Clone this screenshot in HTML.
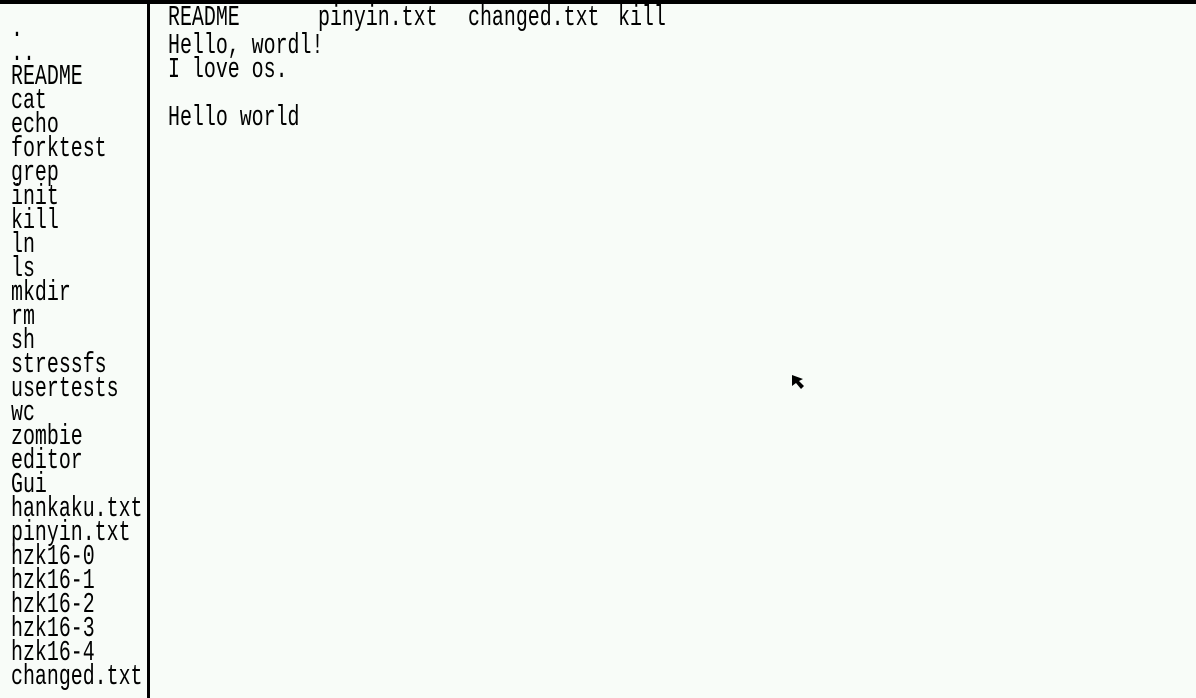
<!DOCTYPE html>
<html><head><style>
html,body{margin:0;padding:0;}
body{width:1196px;height:698px;background:#f8fcf8;position:relative;overflow:hidden;font-family:"Liberation Mono",monospace;color:#000;}
.top{position:absolute;left:0;top:0;width:1196px;height:4px;background:#000;z-index:2;}
.vl{position:absolute;left:147px;top:0;width:3px;height:698px;background:#000;}
.t{position:absolute;white-space:pre;font-size:24px;line-height:20px;transform:scale(0.83,1.2);transform-origin:0 0;}
</style></head><body>
<div class="top"></div>
<div class="vl"></div>
<div class="t" style="left:11px;top:18px;">.
..
README
cat
echo
forktest
grep
init
kill
ln
ls
mkdir
rm
sh
stressfs
usertests
wc
zombie
editor
Gui
hankaku.txt
pinyin.txt
hzk16-0
hzk16-1
hzk16-2
hzk16-3
hzk16-4
changed.txt</div>
<div class="t" style="left:168px;top:7px;">README</div>
<div class="t" style="left:318px;top:7px;">pinyin.txt</div>
<div class="t" style="left:468px;top:7px;">changed.txt</div>
<div class="t" style="left:618px;top:7px;">kill</div>
<div class="t" style="left:168px;top:35px;">Hello, wordl!
I love os.

Hello world</div>
<svg style="position:absolute;left:791px;top:374px" width="18" height="18" viewBox="0 0 18 18"><path d="M1 1 L1 12 L5 9 L10 15 L13 12 L8 7 L12 5 Z" fill="#000"/></svg>
</body></html>
